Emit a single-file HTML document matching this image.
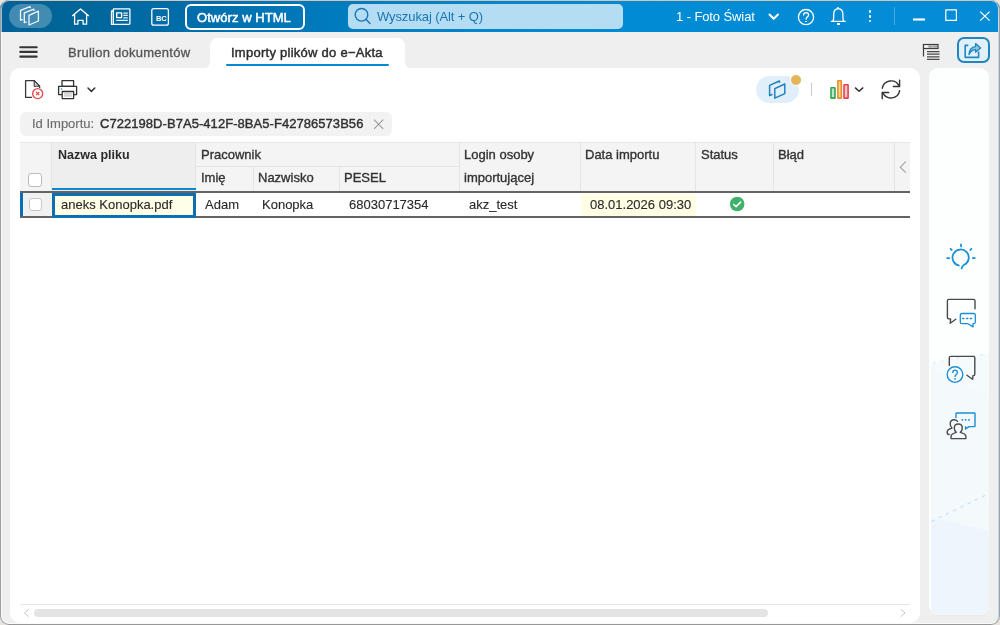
<!DOCTYPE html>
<html><head><meta charset="utf-8">
<style>
*{box-sizing:border-box;margin:0;padding:0}
html,body{width:1000px;height:625px;overflow:hidden;background:#e8e4df;font-family:"Liberation Sans",sans-serif}
.abs{position:absolute}
#win{position:absolute;left:0;top:0;width:1000px;height:625px;border-radius:9px;overflow:hidden;background:#efefef}
#frame{position:absolute;left:0;top:0;width:1000px;height:625px;border-radius:9px;border-top:1px solid #d6c3b8;border-left:1px solid #9e9e9e;border-bottom:1px solid #979797;border-right:1px solid #a0a0a0;pointer-events:none}
#frame2{position:absolute;left:1px;top:1px;width:998px;height:623px;border-radius:8px;border-left:1px solid rgba(255,255,255,0.6);border-bottom:1px solid rgba(255,255,255,0.7);border-right:1px solid #bedcee;pointer-events:none}
#title{position:absolute;left:0;top:0;width:1000px;height:32px;background:linear-gradient(90deg,#00629a 0%,#006597 6%,#006ca8 17%,#007bbd 33%,#0086cd 50%,#008bd4 63%,#068cd6 100%)}
svg{position:absolute;overflow:visible}
.t{position:absolute;white-space:nowrap;will-change:transform}
.m{-webkit-text-stroke:0.35px currentColor}
.r{-webkit-text-stroke:0.12px currentColor}
</style></head>
<body>
<div id="win">
  <div id="title">
    <div class="abs" style="left:9px;top:4px;width:43px;height:24px;border-radius:12px;background:rgba(255,255,255,0.26)"></div>
    <svg style="left:0;top:0" width="60" height="32" fill="none" stroke="#f2f7fb" stroke-width="1.3" stroke-linejoin="round" stroke-linecap="round">
      <path d="M29 15.3 L38.4 11.2 L38.4 21 L29 25 Z"/>
      <path d="M26.3 22 L24.3 22.6 L24.3 12.8 L33.8 9.2 L34 10.3"/>
      <path d="M22.4 19.6 L20.5 20 L20.5 10.3 L30 6.6 L30.3 7.6"/>
    </svg>
    <svg style="left:0;top:0" width="200" height="32" fill="none" stroke="#fff" stroke-width="1.3" stroke-linejoin="round">
      <path d="M72.2 16 L80.5 9 L88.8 16 M74.6 14.2 V24.2 H77.9 V20.3 H83.1 V24.2 H86.6 V14.2"/>
      <rect x="113.3" y="8.8" width="16.6" height="15.6" rx="0.8"/>
      <path d="M113.3 11 H111.5 V24.4 H113.3"/>
      <rect x="116.7" y="12.9" width="4.9" height="4.7" stroke-width="1.4"/>
      <path d="M123.3 13 H127.8 M123.3 15.4 H127.8 M123.3 17.8 H127.8 M116.2 20.3 H127.8" stroke-width="1.25" stroke-opacity="0.9"/>
      <rect x="151.8" y="8.6" width="16.6" height="16.6" rx="2"/>
    </svg>
    <div class="t" style="left:155.6px;top:15.4px;font-size:7.6px;line-height:7.6px;font-weight:700;color:#fff;letter-spacing:-0.3px">BC</div>
    <div class="abs" style="left:185px;top:4px;width:120px;height:25.5px;border:2px solid #fff;border-radius:6px"></div>
    <div class="t" style="left:197.4px;top:10.7px;font-size:13px;line-height:13px;color:#fff;-webkit-text-stroke:0.5px #fff;letter-spacing:0.05px">Otwórz w HTML</div>
    <div class="abs" style="left:348px;top:4px;width:275px;height:25px;border-radius:5px;background:#b4dcf2"></div>
    <svg style="left:0;top:0" width="400" height="32" fill="none" stroke="#1577b6" stroke-width="1.4" stroke-linecap="round">
      <circle cx="361.5" cy="14.8" r="6.3"/>
      <path d="M366 19.3 L370 23.5"/>
    </svg>
    <div class="t" style="left:377px;top:9px;font-size:13px;color:#1577b6;letter-spacing:-0.1px">Wyszukaj (Alt + Q)</div>
    <div class="t" style="left:675.8px;top:9px;font-size:13px;color:#fff;letter-spacing:-0.1px">1 - Foto Świat</div>
    <svg style="left:0;top:0" width="1000" height="32" fill="none" stroke="#fff" stroke-width="1.6" stroke-linecap="round" stroke-linejoin="round">
      <path d="M769.5 14.5 L773.7 18.8 L778 14.5" stroke-width="2"/>
      <circle cx="806" cy="17.1" r="7.6" stroke-width="1.3"/>
      <path d="M803.6 15 C803.6 11.8 808.6 11.8 808.6 15 C808.6 17 806.1 17.2 806.1 19.2" stroke-width="1.3"/>
      <path d="M831.3 21.3 H845.3 M832.8 21.3 C833.5 20.2 833.7 19.2 833.7 17 V14.3 C833.7 11 835.6 8.9 838.3 8.7 C841 8.9 842.9 11 842.9 14.3 V17 C842.9 19.2 843.1 20.2 843.8 21.3" stroke-width="1.3"/>
      <path d="M910 0 M913 19.5 H925" stroke-width="2.1" stroke-linecap="butt"/>
      <rect x="945.8" y="9.8" width="10.6" height="10.6" stroke-width="1.2"/>
      <path d="M980.2 11.6 L989.6 20.6 M989.6 11.6 L980.2 20.6" stroke-width="1.25" stroke-linecap="butt"/>
    </svg>
    <div class="abs" style="left:805.2px;top:20.6px;width:1.8px;height:1.8px;background:#fff;border-radius:1px"></div>
    <div class="abs" style="left:837.2px;top:23.2px;width:2.4px;height:1.8px;background:#fff;border-radius:0.5px"></div><div class="abs" style="left:837.3px;top:6.8px;width:2.2px;height:2.2px;background:#fff;border-radius:50%"></div>
    <div class="abs" style="left:868.6px;top:10.3px;width:2.5px;height:2.5px;background:#fff;border-radius:50%"></div>
    <div class="abs" style="left:868.6px;top:15.1px;width:2.5px;height:2.5px;background:#fff;border-radius:50%"></div>
    <div class="abs" style="left:868.6px;top:19.8px;width:2.5px;height:2.5px;background:#fff;border-radius:50%"></div>
    <div class="abs" style="left:894px;top:7px;width:1px;height:18px;background:rgba(255,255,255,0.25)"></div>
  </div>

  <!-- tab row -->
  <svg style="left:0;top:32px" width="60" height="36">
    <path d="M20.3 15.2 H36.7 M20.3 19.9 H36.7 M20.3 24.6 H36.7" stroke="#363636" stroke-width="2.1" stroke-linecap="round"/>
  </svg>
  <div class="t m" style="left:67.6px;top:46px;font-size:13px;line-height:13px;color:#585858;letter-spacing:0.25px">Brulion dokumentów</div>
  <svg style="left:0;top:36px" width="420" height="34">
    <path d="M203 32.5 C207.5 32.5 210 29.5 210 25 V10 C210 5.5 213.5 2 218 2 H397 C401.5 2 405 5.5 405 10 V25 C405 29.5 407.5 32.5 412 32.5 Z" fill="#fff"/>
  </svg>
  <div class="t" style="left:231.3px;top:45.6px;font-size:13px;line-height:13px;color:#2e2e2e;letter-spacing:0.26px;-webkit-text-stroke:0.45px #2e2e2e">Importy plików do e−Akta</div>
  <div class="abs" style="left:226px;top:64px;width:163px;height:2.2px;background:#0788d2;border-radius:1px"></div>
  <svg style="left:0;top:0" width="1000" height="70" fill="none" stroke="#3c3c3c" stroke-width="1.2">
    <path d="M923.5 44 V56.5"/>
    <rect x="923.5" y="44.5" width="14.5" height="4" fill="#dcdcdc"/>
    <rect x="924.5" y="45.5" width="3" height="2" fill="#fff" stroke="none"/>
    <rect x="928.5" y="45.6" width="4" height="1.8" fill="#9a9a9a" stroke="none"/>
    <rect x="933.3" y="45.6" width="3.8" height="1.8" fill="#9a9a9a" stroke="none"/>
    <path d="M927 51.6 H939.5 M927 54.2 H939.5 M927 56.8 H939.5 M927 59.4 H939.5" stroke="#4a4a4a" stroke-width="1.3"/>
  </svg>
  <div class="abs" style="left:956.5px;top:37px;width:33px;height:26px;border:2px solid #1f87c0;border-radius:7px;background:#e2f0f9"></div>
  <svg style="left:0;top:0" width="1000" height="70" fill="none" stroke="#1f87c0" stroke-width="1.6" stroke-linejoin="round">
    <path d="M968.3 45.4 H965.2 V57.4 H978.6 V51.6"/>
    <path d="M969 54.6 C969 50.2 971.6 46.8 975.6 46.6 V43.6 L980.6 48 L975.6 52.2 V49.6 C972.8 49.6 970.6 51.4 969 54.6 Z" stroke-width="1.3" fill="#8fc2e0"/>
  </svg>

  <!-- main panel -->
  <div class="abs" style="left:10px;top:68px;width:909.5px;height:555px;background:#fff;border-radius:10px"></div>
  <!-- right sidebar -->
  <div class="abs" style="left:929px;top:68px;width:60px;height:546.5px;background:#fdfefe;border-radius:9px;overflow:hidden;box-shadow:0 0.5px 0.5px rgba(0,0,0,0.04)">
    <svg style="left:1.5px;top:0" width="59" height="547">
      <path d="M0 296 C18 291 38 287 59 286 V547 H0 Z" fill="#f5fafd"/>
      <path d="M0 300 L40 320 L59 330 V547 H0 Z" fill="#f3f8fc" opacity="0.6"/>
      <path d="M0 449 L59 463 V547 H0 Z" fill="#eef5fd"/>
      <path d="M2 295.5 C18 291 38 287 57 286.5" stroke="#dcebf7" stroke-width="1.2" stroke-dasharray="3 5" fill="none"/>
      <path d="M0.5 453.5 L58 425.5" stroke="#c8e2f5" stroke-width="1.3" stroke-dasharray="3.5 4.5" fill="none"/>
    </svg>
  </div>

  <!-- toolbar -->
  <svg style="left:0;top:0" width="1000" height="110" fill="none" stroke-linejoin="round">
    <path d="M32 97.4 H25.6 V80.6 H34.2 L39.6 86.2 V88" stroke="#3a3a3a" stroke-width="1.3"/>
    <path d="M34.2 80.6 V86.2 H39.6 Z" fill="#d6d6d6" stroke="#3a3a3a" stroke-width="1.1"/>
    <circle cx="37.7" cy="93.6" r="5" stroke="#e8474a" stroke-width="1.35" fill="#fff"/>
    <path d="M36.1 92 L39.3 95.2 M39.3 92 L36.1 95.2" stroke="#e8474a" stroke-width="1.15"/>
    <rect x="62" y="80.6" width="11.6" height="5.7" stroke="#333" stroke-width="1.3"/>
    <path d="M62 94.6 H58.6 V86.3 H76.6 V94.6 H73.6" stroke="#333" stroke-width="1.3"/>
    <rect x="62.2" y="91.5" width="11.4" height="7.1" stroke="#333" stroke-width="1.3" fill="#fff"/>
    <path d="M64 93.9 H71.8 M64 95.9 H71.8" stroke="#aaa" stroke-width="0.9"/>
    <circle cx="61.5" cy="88.9" r="0.8" fill="#4aa3e0"/>
    <path d="M88 88 L91.4 91.4 L94.8 88" stroke="#333" stroke-width="1.5" stroke-linecap="round"/>
  </svg>
  <div class="abs" style="left:755.5px;top:75.8px;width:43.5px;height:27px;border-radius:13.5px;background:#e0eff9"></div>
  <div class="abs" style="left:789.5px;top:73.5px;width:12.8px;height:12.8px;border-radius:50%;background:#e2b45b;border:1.6px solid #fff"></div>
  <svg style="left:0;top:0" width="1000" height="110" fill="none" stroke-linejoin="round" stroke-linecap="round">
    <path d="M772 94.5 L769.6 95.6 V85.4 L779.4 81 L779.6 82.2" stroke="#1a7fc1" stroke-width="1.45"/>
    <path d="M774.8 88.6 L784.8 84 V93.6 L774.8 98.2 Z" stroke="#1a7fc1" stroke-width="1.45"/>
    <path d="M811.5 83 V95.5" stroke="#cfcfcf" stroke-width="1.2"/>
    <rect x="831" y="87.8" width="4" height="10.3" rx="0.4" stroke="#2ea556" stroke-width="1.6" fill="#c2e5c9"/>
    <rect x="837.9" y="80.8" width="3.4" height="17.3" rx="0.4" stroke="#ec8a2d" stroke-width="1.6" fill="#f8d98f"/>
    <rect x="844" y="84.8" width="4.1" height="13.3" rx="0.4" stroke="#e6454b" stroke-width="1.6" fill="#f4c6c9"/>
    <path d="M855.4 87.9 L859.1 91.3 L862.8 87.9" stroke="#333" stroke-width="1.45"/>
    <path d="M882.3 88.2 A8.9 8.9 0 0 1 898.9 85.6" stroke="#333" stroke-width="1.4"/>
    <path d="M899.6 90.8 A8.9 8.9 0 0 1 883 93.2" stroke="#333" stroke-width="1.4"/>
    <path d="M899.6 80.3 V86.5 H893.3" stroke="#333" stroke-width="1.4"/>
    <path d="M882.2 98.7 V92.5 H888.7" stroke="#333" stroke-width="1.4"/>
  </svg>

  <!-- table -->
  <div class="abs" style="left:20px;top:142px;width:890px;height:50px;background:#f4f4f4;border-top:1px solid #e6e6e6"></div>
  <div class="abs" style="left:51.5px;top:143px;width:144px;height:49px;background:#eeeeee"></div>
  <svg style="left:0;top:0" width="1000" height="220" fill="none">
    <path d="M51.5 143 V191 M195.5 143 V191 M253.5 166.5 V191 M339.5 166.5 V191 M459.5 143 V191 M580.5 143 V191 M695.5 143 V191 M773.5 143 V191 M894.5 143 V191" stroke="#e4e4e4" stroke-width="1"/>
    <path d="M195.5 166.5 H459.5" stroke="#e4e4e4" stroke-width="1"/>
    <path d="M905.8 161.7 L900.2 167.2 L905.8 172.7" stroke="#a0a0a0" stroke-width="1.1"/>
  </svg>
  <div class="abs" style="left:52px;top:188px;width:143.5px;height:2.2px;background:#0a88d0"></div>
  <div class="abs" style="left:28px;top:173px;width:14px;height:14px;border:1.3px solid #bcbcbc;border-radius:3px;background:#fff"></div>
  <div class="t" style="left:57.5px;top:148.9px;font-size:12.5px;line-height:12.5px;color:#2b2b2b;font-weight:700">Nazwa pliku</div>
  <div class="t m" style="left:201.2px;top:148.4px;font-size:13px;line-height:13px;color:#333">Pracownik</div>
  <div class="t m" style="left:201.2px;top:170.9px;font-size:13px;line-height:13px;color:#333">Imię</div>
  <div class="t m" style="left:257.6px;top:170.9px;font-size:13px;line-height:13px;color:#333">Nazwisko</div>
  <div class="t m" style="left:344.1px;top:170.9px;font-size:13px;line-height:13px;color:#333">PESEL</div>
  <div class="t m" style="left:464.4px;top:148.2px;font-size:13px;line-height:13px;color:#333">Login osoby</div>
  <div class="t m" style="left:464.4px;top:170.9px;font-size:13px;line-height:13px;color:#333">importującej</div>
  <div class="t m" style="left:585px;top:148.4px;font-size:13px;line-height:13px;color:#333">Data importu</div>
  <div class="t m" style="left:701px;top:148.4px;font-size:13px;line-height:13px;color:#333">Status</div>
  <div class="t m" style="left:778px;top:148.4px;font-size:13px;line-height:13px;color:#333">Błąd</div>

  <div class="abs" style="left:20px;top:191px;width:890px;height:2px;background:#646464"></div>
  <div class="abs" style="left:20px;top:215.5px;width:890px;height:2px;background:#646464"></div>
  <div class="abs" style="left:20px;top:193px;width:3px;height:22.5px;background:#0b70b3"></div>
  <div class="abs" style="left:23px;top:193px;width:29px;height:22.5px;background:#f1f1f1"></div>
  <div class="abs" style="left:28.5px;top:197.5px;width:13.5px;height:13.5px;border:1.2px solid #c8c8c8;border-radius:3px;background:#fff"></div>
  <div class="abs" style="left:581px;top:193.5px;width:115px;height:22px;background:#fffde3"></div>
  <div class="abs" style="left:52.2px;top:192.5px;width:144px;height:25px;border:3px solid #0b6fb1;background:#fffee6"></div>
  <div class="t r" style="left:61px;top:198px;font-size:13px;line-height:13px;color:#2a2a2a">aneks Konopka.pdf</div>
  <div class="t r" style="left:204.9px;top:198px;font-size:13px;line-height:13px;color:#2a2a2a">Adam</div>
  <div class="t r" style="left:262px;top:198px;font-size:13px;line-height:13px;color:#2a2a2a">Konopka</div>
  <div class="t r" style="left:348.8px;top:198px;font-size:13px;line-height:13px;color:#2a2a2a">68030717354</div>
  <div class="t r" style="left:468.8px;top:198px;font-size:13px;line-height:13px;color:#2a2a2a">akz_test</div>
  <div class="t r" style="left:590px;top:198px;font-size:13px;line-height:13px;color:#2a2a2a">08.01.2026 09:30</div>
  <svg style="left:0;top:0" width="1000" height="220">
    <circle cx="737.15" cy="204" r="7.3" fill="#40b06a"/>
    <path d="M733.7 204.5 L736.1 206.6 L740.6 202.1" stroke="#fff" stroke-width="1.5" fill="none" stroke-linecap="round" stroke-linejoin="round"/>
  </svg>

  <!-- scrollbar -->
  <div class="abs" style="left:20px;top:603.5px;width:890px;height:1px;background:#e6e6e6"></div>
  <div class="abs" style="left:33.5px;top:609px;width:734.5px;height:8px;border-radius:4px;background:#e4e4e4"></div>
  <svg style="left:0;top:0" width="1000" height="625" fill="none">
    <path d="M28.8 609.2 L24.4 613 L28.8 616.8" stroke="#c4c4c4" stroke-width="1"/>
    <path d="M900.6 609.2 L905 613 L900.6 616.8" stroke="#c4c4c4" stroke-width="1"/>
  </svg>

  <!-- sidebar icons -->
  <svg style="left:0;top:0" width="1000" height="625" fill="none" stroke-linecap="round" stroke-linejoin="round">
    <g stroke="#1a8fd6" stroke-width="1.75">
      <path d="M958.9 265.5 A8.1 8.1 0 1 1 963.9 265 C962.8 265.6 962 266.8 961.6 268.5"/>
      <path d="M961 244.4 V246.4 M950.6 248.8 L951.7 250 M971.4 248.8 L970.3 250 M947.2 258 H949.2 M972.8 258 H974.8"/>
    </g>
    <g stroke="#4a4a4a" stroke-width="1.4">
      <path d="M975 308.8 V300.8 C975 299.9 974.5 299.4 973.6 299.4 H948.8 C947.9 299.4 947.4 299.9 947.4 300.8 V317.4 C947.4 318.2 947.9 318.7 948.6 318.8 L950.6 319 L950.2 323.3 L955.8 319.2"/>
    </g>
    <g stroke="#1a8fd6" stroke-width="1.4">
      <path d="M973 323.7 V326.9 L967.8 323.7 H961.9 C960.9 323.7 960.3 323.1 960.3 322.1 V315.1 C960.3 314.1 960.9 313.5 961.9 313.5 H973.7 C974.7 313.5 975.3 314.1 975.3 315.1 V322.1 C975.3 323.1 974.7 323.7 973.7 323.7 Z" stroke-width="1.3"/>
      <path d="M962.8 318.6 H963.9 M966.6 318.6 H967.7 M970.4 318.6 H971.5" stroke-width="1.5"/>
    </g>
    <g stroke="#4a4a4a" stroke-width="1.4">
      <path d="M949.3 365.4 V357.8 C949.3 356.9 949.8 356.4 950.7 356.4 H973.4 C974.3 356.4 974.8 356.9 974.8 357.8 V374.2 C974.8 375 974.3 375.5 973.6 375.6 L973 375.7 L972.6 379.3 L966.9 375.2"/>
    </g>
    <g stroke="#1a8fd6" stroke-width="1.4">
      <circle cx="955" cy="374.6" r="7.8"/>
      <path d="M952.8 372.4 C952.8 369.4 957.4 369.4 957.4 372.4 C957.4 374.3 955.1 374.5 955.1 376.4"/>
      <path d="M955.1 378.8 V378.9" stroke-width="1.7"/>
    </g>
    <g stroke="#1a8fd6" stroke-width="1.4">
      <path d="M956 417.5 V413.6 C956 413.2 956.2 413 956.6 413 H974.4 C974.8 413 975 413.2 975 413.6 V426 C975 426.4 974.8 426.6 974.4 426.6 H969 L965.6 429 V426.6"/>
      <path d="M962.2 419.9 H962.5 M965.5 419.9 H965.8 M968.8 419.9 H969.1" stroke-width="1.6"/>
    </g>
    <g stroke="#4a4a4a" stroke-width="1.4">
      <path d="M956.3 432.4 C954.8 431.2 954.3 429.6 954.3 428 C954.3 425.6 956 424 958.3 424 C960.6 424 962.3 425.6 962.3 428 C962.3 429.6 961.8 431.2 960.3 432.4 C963.5 433.2 965.9 434.6 965.9 436.6 V438.6 H951 V436.6 C951 434.6 953.3 433.2 956.3 432.4 Z"/>
      <path d="M957.6 421.3 C956.8 420.2 955.5 419.7 954.1 419.7 C951.8 419.7 950.2 421.5 950.2 423.8 C950.2 425.6 950.8 427 952 428 C949.3 428.8 947.1 430.2 947.1 432.3 C947.1 433.6 947.9 434.5 949.2 434.5"/>
    </g>
  </svg>

  <!-- chip -->
  <div class="abs" style="left:20px;top:112px;width:372px;height:24px;border-radius:6px;background:#f2f2f2"></div>
  <div class="t" style="left:31.6px;top:117.4px;font-size:13px;line-height:13px;color:#6c6c6c;-webkit-text-stroke:0.15px #6c6c6c">Id Importu:</div>
  <div class="t" style="left:99.6px;top:117.4px;font-size:13px;line-height:13px;color:#303030;-webkit-text-stroke:0.4px #303030;letter-spacing:0.05px">C722198D-B7A5-412F-8BA5-F42786573B56</div>
  <svg style="left:0;top:0" width="400" height="140"><path d="M374 119.6 L383.2 128.8 M383.2 119.6 L374 128.8" stroke="#9a9a9a" stroke-width="1.1"/></svg>
</div>
<div id="frame2"></div><div id="frame"></div>
</body></html>
